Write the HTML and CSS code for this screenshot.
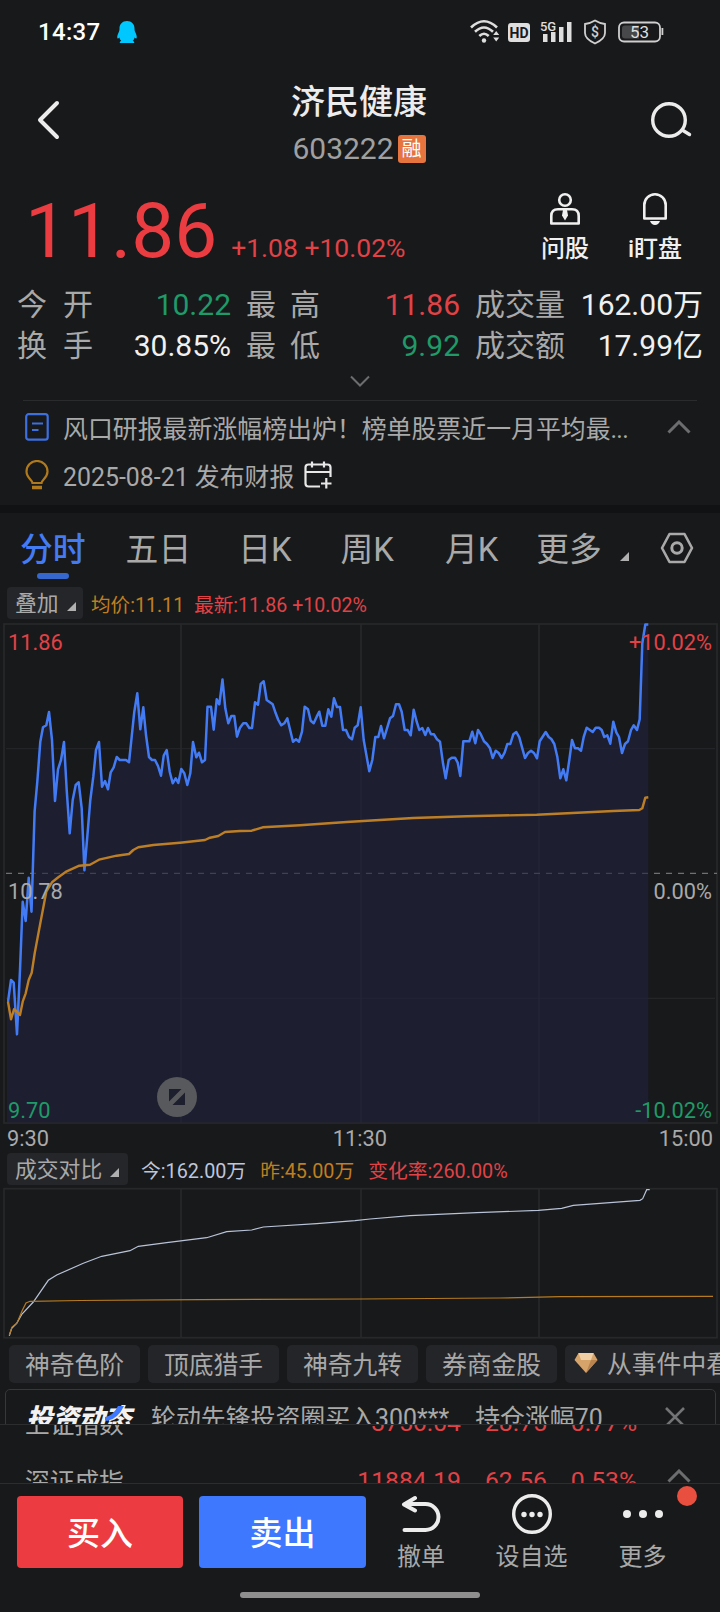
FILE: index.html
```html
<!DOCTYPE html>
<html lang="zh-CN">
<head>
<meta charset="utf-8">
<title>济民健康 603222</title>
<link rel="stylesheet" href="styles.css">
</head>
<body>
<div class="phone">

	<!-- status bar -->
	<div class="status">
		<span class="clock">14:37</span>
		<svg class="qq" width="22" height="24" viewBox="0 0 22 24"><path fill="#00c8ff" d="M11 1c4.600 0 7.500 3.200 7.500 7.500 0 2 .3 2.800 1 4.200 1.200 2.300 1.600 4.300 1 5.600-.4.700-1.200 0-1.900-.9-.3 1.500-1 2.600-1.900 3.400 1.200.5 1.700 1.100 1.500 2.200H3.800c-.2-1.100.3-1.700 1.500-2.200-.9-.8-1.600-1.900-1.900-3.400-.7.900-1.500 1.600-1.900.9-.6-1.300-.2-3.300 1-5.600.7-1.400 1-2.200 1-4.200C3.500 4.200 6.400 1 11 1z"/></svg>
		<svg class="sys" width="196" height="28" viewBox="0 0 196 28">
			<g fill="none" stroke="#dedede" stroke-width="2.600">
				<path d="M1 9.500q13-12.500 26 0"/>
				<path d="M5 13.800q9-8.600 18 0"/>
				<path d="M9.300 18q4.700-4.500 9.400 0"/>
			</g>
			<circle cx="14" cy="22.500" r="2.200" fill="#dedede"/>
			<path fill="#dedede" d="M23.200 17l3-4 3 4zM23.200 19.500l3 4 3-4z"/>
			<rect x="38" y="5" width="22" height="19" rx="3" fill="#dedede"/>
			<text x="49" y="20" class="hd">HD</text>
			<g fill="#dedede">
				<rect x="73" y="16" width="4.500" height="8"/>
				<rect x="81" y="14" width="4.500" height="10"/>
				<rect x="89" y="9" width="4.500" height="15"/>
				<rect x="97" y="4" width="4.500" height="20"/>
			</g>
			<text x="78" y="12.500" class="net">5G</text>
			<path fill="none" stroke="#cfcfcf" stroke-width="1.800" d="M125 2.500c3.500 2.200 6.500 3 10 3.500v9c0 5-4.500 8-10 10.500-5.500-2.500-10-5.500-10-10.500V6c3.500-.5 6.500-1.300 10-3.500z"/>
			<text x="125" y="19" class="coin">$</text>
			<rect x="149" y="4.500" width="41" height="19" rx="5" fill="none" stroke="#cfcfcf" stroke-width="1.800"/>
			<path fill="#47484a" d="M155 7.500h14v13h-14q-3 0-3-3v-7q0-3 3-3z"/>
			<path fill="#cfcfcf" d="M191.500 10h1.800v7h-1.800z"/>
			<text x="169.500" y="20" class="bat">53</text>
		</svg>
	</div>

	<!-- title -->
	<div class="head">
		<svg class="back" width="24" height="42" viewBox="0 0 24 42"><path fill="none" stroke="#ececec" stroke-width="4" stroke-linecap="round" stroke-linejoin="round" d="M20 4L3 21l17 17"/></svg>
		<div class="title">
			<h1>济民健康</h1>
			<div class="code"><span>603222</span><i>融</i></div>
		</div>
		<svg class="search" width="42" height="40" viewBox="0 0 42 40"><g fill="none" stroke="#ececec" stroke-width="3.400" stroke-linecap="round"><circle cx="19" cy="20" r="16.300"/><path d="M33 30.500l6.500 4"/></g></svg>
	</div>

	<!-- price -->
	<div class="price">
		<b class="now">11.86</b>
		<span class="chg">+1.08 +10.02%</span>
		<div class="acts">
			<div class="act">
				<svg width="32" height="34" viewBox="0 0 32 34"><g fill="none" stroke="#f0f0f0" stroke-width="2.600"><circle cx="16" cy="8" r="5.800"/><path d="M2.300 31.500V24q0-6.700 6.700-6.700h14q6.700 0 6.700 6.700v7.500z" stroke-linejoin="round"/></g><path fill="#f0f0f0" d="M14 18h4l1 5.500-3 5-3-5z"/></svg>
				<span>问股</span>
			</div>
			<div class="act">
				<svg width="32" height="34" viewBox="0 0 32 34"><path fill="none" stroke="#f0f0f0" stroke-width="2.600" stroke-linejoin="round" d="M5.300 26.500V13a10.700 10.700 0 0 1 21.400 0v13.500z"/><path fill="#f0f0f0" d="M11 29h10q-1.500 4-5 4t-5-4z"/></svg>
				<span>i盯盘</span>
			</div>
		</div>
	</div>

	<!-- quote grid -->
	<div class="stats">
		<div class="k"><span>今</span><span>开</span></div><div class="v green">10.22</div>
		<div class="k"><span>最</span><span>高</span></div><div class="v red">11.86</div>
		<div class="k">成交量</div><div class="v">162.00万</div>
		<div class="k"><span>换</span><span>手</span></div><div class="v">30.85%</div>
		<div class="k"><span>最</span><span>低</span></div><div class="v green">9.92</div>
		<div class="k">成交额</div><div class="v">17.99亿</div>
	</div>
	<div class="unfold"><svg width="20" height="12" viewBox="0 0 20 12"><path fill="none" stroke="#6c6d6f" stroke-width="2" d="M1 1.500l9 9 9-9"/></svg></div>

	<!-- news -->
	<div class="news">
		<div class="line">
			<svg width="26" height="28" viewBox="0 0 26 28"><g fill="none" stroke="#3d6fe0" stroke-width="2.200"><rect x="2.200" y="1.200" width="21.500" height="25.500" rx="2.500"/><path d="M8 10.500h11M8 17h6.500"/></g></svg>
			<p>风口研报最新涨幅榜出炉！榜单股票近一月平均最<span class="dots">...</span></p>
			<svg class="fold" width="24" height="14" viewBox="0 0 24 14"><path fill="none" stroke="#6c6d6f" stroke-width="3" d="M1.500 12.500L12 2l10.500 10.500"/></svg>
		</div>
		<div class="line">
			<svg width="26" height="30" viewBox="0 0 26 30"><g fill="none" stroke="#b07a1c" stroke-width="2.200"><path d="M8.500 23c0-3-6-5-6-11.500a10.500 10.500 0 0 1 21 0c0 6.500-6 8.500-6 11.500z"/><path d="M8 27.500h10" stroke-width="3.500"/></g></svg>
			<p>2025-08-21 发布财报</p>
			<svg class="cal" width="28" height="28" viewBox="0 0 28 28"><g fill="none" stroke="#e8e8e8" stroke-width="2.200"><path d="M16 25.500H4.500q-3 0-3-3v-16q0-3 3-3h19q3 0 3 3V16M1.500 11h25M8 .5v6M20 .5v6M17 22.500h10.500M22.300 17v10.500"/></g></svg>
		</div>
	</div>

	<!-- period tabs -->
	<div class="tabs">
		<div class="tab on">分时</div>
		<div class="tab">五日</div>
		<div class="tab">日K</div>
		<div class="tab">周K</div>
		<div class="tab">月K</div>
		<div class="tab">更多<i class="tri"></i></div>
		<svg width="34" height="32" viewBox="0 0 34 32"><g fill="none" stroke="#a9a9a9" stroke-width="2.600"><path d="M9.500 2h15L32 16l-7.500 14h-15L2 16z" stroke-linejoin="round"/><circle cx="17" cy="16" r="5.200" stroke-width="3"/></g></svg>
	</div>

	<!-- minute chart -->
	<div class="legend">
		<div class="pick">叠加<i class="tri"></i></div>
		<span class="orange avg">均价:11.11</span>
		<span class="red">最新:11.86 +10.02%</span>
	</div>
	<div class="chart">
		<svg width="720" height="504" viewBox="0 622 720 504">
			<clipPath id="session"><rect x="7" y="622" width="641.300" height="500.500"/></clipPath>
			<g class="grid">
				<rect x="4" y="624" width="713" height="499"/>
				<path d="M181 624v499M361 624v499M539 624v499"/>
				<path class="thin" d="M6 748.700h709M6 998.300h709"/>
			</g>
			<path class="mid" d="M6 873.300h711"/>
			<!-- sides run outside the session clip so only the price edge is stroked -->
			<path class="area" clip-path="url(#session)" d="M3 1140V1001.700H8L11 980L13.700 982.700L17 1034.300L20 970L22.700 901.700L25.700 921L28.700 877.700L31.500 911.700L34.600 811.700L37.300 781.700L40.300 741.700L43 727.300L46.300 725.300L49 712L52 740L55 801L58 769.300L61 760L64 742L66.700 790L69.700 833.300L72.700 800L75.700 785L78.700 782.300L81.700 808.300L84.400 870.300L87.300 836.700L90.300 800L93.300 776.700L96 750L99 742L102 786.700L105 781L108 789.300L110.700 772.300L113.700 767.300L116.700 757L119.700 760H126L129 762.300L131.700 736.700L134.300 711.700L137.300 693.300L140.300 729.300L143.300 707.300L146 735L149 757L152 760H155L158 766L161 775.700L163.700 755.700L166.700 750L169.700 771.700L172.700 783.300L175.700 778.300L178.300 783L181.300 769L184.300 773.300L187.300 785L190.300 773.300L193 742L196.300 757.300L199 752.700L202 762.300L205 760L207.500 706.700H211L213.700 729.700L216.700 699.300L219.300 704.300L222.500 679.500L225.300 708.300L228.300 723.300L231.300 716H234.300L237 736.700L240 727.700L243.300 723.300H246.300L249.300 728H252L255 702.300L258 704.700L260.700 684L263.700 681.300L266.700 700L272.700 704.300L275.700 713.300L278.300 720L281.300 725.300L284.300 723.300L287.300 718.300L293 741.700L296 739.300L299 741.700L302 731.700L304.700 706.700L308 709.300L310.700 720.700L313.700 723.300L316.700 716.700L319.300 711.700L322.300 725.700H325.300L328.300 709.300L331.300 716.700L334 698.300L337 707H340L343 730H346L349 737L352 739.300L354.700 727.700L357.700 725.300L360.700 707.300L363.700 740L369.300 771.300L372.300 760L375.300 737H378.300L381 726L384 738.300L390 718.300L393 716L396 704.300H399L401.700 711.700L404.700 730H407.700L410.700 735.300L413.700 709.700L416.700 721.700L419.300 730L422.300 728L425.300 735L428 728L431 734.300H434L437 739.300L440 741.700L443 763.300L445.700 778.300L448.700 760L451.700 757.700H455L457.700 762.700L460.300 776L463.300 741.300H469.300L472.300 731.700L475.300 743.300L478 730L481 734.700L484 741.300L487 744L490 748.300L492.700 758L495.700 750.700L498.700 753L501.700 758L504.700 752.300L507.300 744H510.300L513.300 734.300L516.300 732L519.300 737.300L522.300 748.300L525 758L528 753L531 750.700L534 753L537 758.300L539.700 741.300L545.700 732L548.700 737L551.300 739L554.300 744L557.300 756.700L560.300 778.300L563.300 769.300L566.300 780.300L569.300 760L572 740L575 748.300H578L581 750.700L583.700 737L586.700 727.700L592.700 732L595.700 727.700H599L601.700 730L604.300 737L607.300 735.300L610.300 743.700L613.300 721.700L616.300 732.300L619 737L622 753L625 744L628 741.300L631 730L633.700 725.300L637 730L639.700 719.300L642.300 643.300L645.300 624.500H655V1140z"/>
			<path class="cost" d="M8 1001.700L11 1019.300L14 1009.300L17 1011.700L20 1015L22.700 1001.700L25.700 993.300L28.700 980L31.700 972.700L34.700 953.300L40.300 923.300L46.300 891.700L49 887L52 882.300L58.300 877.300L66.700 871.300L79.300 865.700L90 864.700L99 859.700L116.700 855.700L129 854L133.300 850L138.300 847.300L153.300 845L180 842.700L205 840L210 837.700L218.300 836L225 832L240 831L251.700 830.700L262.700 827.300L300 825.300L346.700 822L413.300 818L466.700 816.300L536.700 814.700L613.300 811L639.300 810L642.300 808.300L645.300 797.700L648.300 797.300"/>
		</svg>
		<span class="lab t red">11.86</span>
		<span class="lab t r red">+10.02%</span>
		<span class="lab m">10.78</span>
		<span class="lab m r">0.00%</span>
		<span class="lab b green">9.70</span>
		<span class="lab b r green">-10.02%</span>
		<svg class="full" width="40" height="40" viewBox="0 0 40 40"><circle cx="20" cy="20" r="20" fill="#58595c"/><path fill="#1d1e2e" d="M12 12h12.500L12 24.500zM28 28H15.500L28 15.500z"/></svg>
	</div>
	<div class="hours"><span>9:30</span><span>11:30</span><span>15:00</span></div>

	<!-- volume compare -->
	<div class="legend vol">
		<div class="pick">成交对比<i class="tri"></i></div>
		<span class="pale">今:162.00万</span>
		<span class="orange">昨:45.00万</span>
		<span class="red">变化率:260.00%</span>
	</div>
	<svg class="volume" width="720" height="152" viewBox="0 1187 720 152">
		<g class="grid">
			<rect x="4" y="1188.700" width="713" height="149"/>
			<path d="M181 1189v149M361 1189v149M539 1189v149"/>
		</g>
		<path class="today" d="M9.300 1335.700L11.700 1328.300L16.700 1323.300L22 1314L33.300 1302L48.300 1280.300L56.700 1275L83.300 1263.300L101.700 1256.300L130 1250.700L138.300 1246.300L166.700 1242.700L206.700 1237.700L226.700 1231.700L251.700 1230L263.300 1227L316.700 1223.700L355 1220.700L370 1219L410 1215.700L476.700 1212.700L538.300 1210.300L561.700 1208.300L573.300 1205.300L640 1200.300L642.700 1198.700L646.700 1189.700H649.700"/>
		<path class="last" d="M9.300 1335L12 1327L17 1323L22 1311L26 1303L30 1301.300L80 1300.500L200 1299.700L360 1299L500 1298L560 1296.700L713 1296.300"/>
	</svg>

	<!-- tool tags -->
	<div class="tags">
		<span>神奇色阶</span>
		<span>顶底猎手</span>
		<span>神奇九转</span>
		<span>券商金股</span>
		<span class="gem"><svg width="24" height="22" viewBox="0 0 24 22"><path fill="#d6a36b" d="M4.500 1h15L23.500 8 12 21 .5 8z"/><path fill="#f0cfa4" d="M4.500 1h15L17 8H7z"/><path fill="#b98450" d="M17 8h6.500L12 21z"/></svg>从事件中看</span>
	</div>

	<!-- investor banner, runs under the index list -->
	<div class="banner">
		<div class="box">
			<span class="logo">投资动态<svg width="20" height="18" viewBox="0 0 20 18"><path fill="#3d78ff" d="M13 1h6q-6 13-17 15l-2-1v-3q8-1 13-11z"/></svg></span>
			<p>轮动先锋投资圈买入300***</p>
			<p class="gain">持仓涨幅70....</p>
			<svg class="close" width="20" height="20" viewBox="0 0 20 20"><path stroke="#737476" stroke-width="2.600" d="M1 1l18 18M19 1L1 19"/></svg>
		</div>
	</div>

	<!-- index ticker -->
	<div class="ticker">
		<div class="idx"><span>上证指数</span><b>3756.04</b><b>28.75</b><b>0.77%</b></div>
		<div class="idx"><span>深证成指</span><b>11884.19</b><b>62.56</b><b>0.53%</b><svg width="24" height="14" viewBox="0 0 24 14"><path fill="none" stroke="#6c6d6f" stroke-width="3" d="M1.500 12.500L12 2l10.500 10.500"/></svg></div>
	</div>

	<!-- bottom bar -->
	<div class="bar">
		<div class="btn buy">买入</div>
		<div class="btn sell">卖出</div>
		<div class="item undo">
			<svg width="40" height="40" viewBox="0 0 40 40"><path fill="none" stroke="#ececec" stroke-width="4" stroke-linecap="round" stroke-linejoin="round" d="M14 4L3 10.500 14 16.500M4 10h20.500a13 13 0 0 1 0 26H3.500"/></svg>
			<span>撤单</span>
		</div>
		<div class="item">
			<svg width="40" height="40" viewBox="0 0 40 40"><circle cx="20" cy="20" r="18.300" fill="none" stroke="#ececec" stroke-width="3.400"/><g fill="#ececec"><circle cx="12" cy="20.500" r="2.700"/><circle cx="20" cy="20.500" r="2.700"/><circle cx="28" cy="20.500" r="2.700"/></g></svg>
			<span>设自选</span>
		</div>
		<div class="item more">
			<svg width="40" height="40" viewBox="0 0 40 40"><g fill="#ececec"><circle cx="4" cy="20" r="4"/><circle cx="20" cy="20" r="4"/><circle cx="36" cy="20" r="4"/></g></svg>
			<span>更多</span>
			<i class="dot"></i>
		</div>
	</div>
	<div class="home"></div>
</div>
</body>
</html>
```
FILE: styles.css
```css
*{box-sizing:border-box;}
html{overflow:hidden;}
body{margin:0; background:#18191b; color:#a9a9a9; font-family:Roboto,"Noto Sans CJK SC",sans-serif;}
h1,p{margin:0; font-weight:normal;}
i{font-style:normal;}
b{font-weight:normal;}
svg{display:block; flex:none;}
.phone{width:720px; height:1612px; overflow:hidden; display:flex; flex-direction:column; white-space:nowrap;}
.phone>*{flex:none;}
.red{color:#e04246;}
.green{color:#1f9a68;}
.orange{color:#c07f1f;}
.pale{color:#bcc6de;}

/* status */
.status{height:64px; display:flex; align-items:center; padding:0 54px 0 38px;}
.clock{font-size:24px; font-weight:500; color:#fff; width:78px; letter-spacing:.3px;}
.sys{margin-left:auto;}
.sys text{font-family:Roboto,sans-serif; text-anchor:middle;}
.hd{font-size:14px; font-weight:700; fill:#18191b;}
.net{font-size:13px; font-weight:500; fill:#dedede;}
.coin{font-size:14px; font-weight:500; fill:#cfcfcf;}
.bat{font-size:17px; fill:#dedede;}

/* title */
.head{height:112px; display:flex; align-items:center; justify-content:space-between; padding:0 28px 0 37px;}
.title{text-align:center; padding:12px 0 0 7px;}
.title h1{font-size:34px; line-height:46px; font-weight:500; color:#ececec;}
.code{display:flex; align-items:center; justify-content:center; gap:4px; font-size:30px; line-height:48px; color:#a0a0a0;}
.code i{width:28px; height:28px; border-radius:3px; background:#e5743e; color:#fff; font-size:20px; line-height:28px; text-align:center;}

/* price */
.price{height:100px; display:flex; align-items:baseline; padding-left:25px;}
.now{font-size:76.5px; line-height:111px; color:#eb3c41;}
.chg{font-size:26.5px; color:#e04246; margin-left:14px;}
.acts{margin-left:auto; align-self:flex-start; display:flex; padding:16px 20px 0 0;}
.act{width:90px; display:flex; flex-direction:column; align-items:center; font-size:24px; line-height:36px; font-weight:500; color:#f0f0f0; gap:5px;}

/* quotes */
.stats{height:87px; padding:8px 17px 0; display:grid; grid-template-columns:76px 138px 15px 74px 140px 15px 90px 1fr; grid-auto-rows:41px; font-size:30px; line-height:41px;}
.k{display:flex; justify-content:space-between;}
.k:nth-child(6n+3){grid-column:4;}
.k:nth-child(6n+5){grid-column:7;}
.v{text-align:right; color:#f0f0f0;}
.v.green{color:#1f9a68;}
.v.red{color:#e04246;}
.unfold{height:37px; display:flex; justify-content:center; padding-top:12px;}

/* news */
.news{height:105px; margin:0 23px; border-top:1px solid #2a2b2d; padding:2px 0 0 1px;}
.line{display:flex; align-items:center; height:48px; font-size:24.9px;}
.line p{margin-left:13px;}
.dots{letter-spacing:-.8px;}
.fold{margin-left:auto; margin-right:6px;}
.cal{margin-left:10px;}

/* tabs */
.tabs{height:79px; border-top:8px solid #111214; display:flex; align-items:flex-start; padding:10px 26px 0 20px; font-size:32.8px; line-height:54px;}
.tab{position:relative; margin-right:40px;}
.tab.on{color:#437bf5; font-weight:500;}
.tab.on:after{content:""; position:absolute; left:17px; bottom:-2px; width:32px; height:6px; border-radius:3px; background:#3567cf;}
.tab:nth-child(2){margin-right:47px;}
.tab:nth-child(3){margin-right:49px;}
.tab:nth-child(4){margin-right:51px;}
.tab:nth-child(5){margin-right:38px;}
.tab:nth-child(6){margin-right:0;}
.tabs svg{margin:9px 0 0 auto;}
.tri{display:inline-block; border-left:9px solid transparent; border-bottom:9px solid #b0b0b0;}
.tab .tri{margin-left:18px;}

/* legends */
.legend{height:35px; display:flex; align-items:center; padding:0 0 3px 7px; margin-top:3px; font-size:19.6px;}
.pick{width:76px; height:32px; padding-left:8px; border-radius:4px; background:#25262a; color:#a9a9a9; font-size:21.8px; line-height:34px;}
.pick .tri{margin-left:8px;}
.legend .avg{margin:0 10px 0 8px;}
.vol{margin-top:0; height:34px; padding-bottom:2px;}
.vol .pick{width:121px;}
.vol .pale{margin:0 14px 0 13px; font-size:19.8px;}
.vol .orange{margin-right:14px; font-size:19.8px;}
.vol .red{font-size:19.8px;}

/* minute chart */
.chart{position:relative; height:504px;}
.grid{fill:none; stroke:#27282a; stroke-width:1.7;}
.grid .thin{stroke-width:1;}
.mid{fill:none; stroke:#85868a; stroke-width:1; stroke-dasharray:6 6;}
.area{fill:rgba(33,33,64,.6); stroke:#437bf5; stroke-width:2.5; stroke-linejoin:round;}
.cost{fill:none; stroke:#bd7f26; stroke-width:2.4; stroke-linejoin:round;}
.lab{position:absolute; left:8px; font-size:21.8px; line-height:26px;}
.lab.r{left:auto; right:8px;}
.lab.t{top:8px;}
.lab.m{top:257px;}
.lab.b{top:476px;}
.full{position:absolute; left:157px; top:455px;}
.hours{height:27px; display:grid; grid-template-columns:1fr 1fr 1fr; padding:0 7px; font-size:21.8px; line-height:26px;}
.hours span:nth-child(2){text-align:center;}
.hours span:nth-child(3){text-align:right;}
.today{fill:none; stroke:#b9c3d8; stroke-width:1.2;}
.last{fill:none; stroke:#b57a22; stroke-width:1.2;}

/* tags */
.tags{height:50px; display:flex; gap:8px; padding:6px 0 0 9px;}
.tags span{flex:none; width:131px; height:38px; border-radius:5px; background:#242528; font-size:24.8px; line-height:41px; text-align:center;}
.tags .gem{width:190px; display:flex; align-items:center; padding-left:9px; gap:9px;}
.gem svg{margin-top:-3px;}

/* banner */
.banner{height:35px; padding:0 4px 0 5px; overflow:hidden;}
.box{height:60px; border:1px solid #37383a; border-radius:5px; display:flex; align-items:center; padding:0 30px 6px 20px; font-size:24.9px;}
.logo{position:relative; width:125px; font-size:26.5px; font-weight:900; font-style:italic; color:#f2f2f2; letter-spacing:-.3px;}
.logo svg{position:absolute; left:79px; top:8px;}
.gain{margin-left:26px;}
.close{margin:2px 0 0 auto;}

/* ticker */
.ticker{height:59px; border-top:1px solid #2c2d2f; overflow:hidden;}
.idx{display:flex; height:58px; align-items:center; padding-left:25px; font-size:24.7px; position:relative; top:-32px;}
.idx span{width:120px;}
.idx b{color:#e04246; width:90px; text-align:right;}
.idx span+b{width:316px;}
.idx b+b{width:86px;}
.idx b+b+b{width:90px;}
.idx svg{margin-left:30px; margin-top:-8px;}

/* bottom */
.bar{height:98px; border-top:1px solid #2c2d2f; display:flex; padding:12px 0 0 17px;}
.btn{width:166px; height:72px; border-radius:4px; color:#fff; font-size:33px; font-weight:500; line-height:75px; text-align:center;}
.buy{background:#ed3c41; margin-right:16px;}
.sell{background:#3d78ff; width:167px;}
.item{position:relative; width:111px; display:flex; flex-direction:column; align-items:center; font-size:24px; line-height:36px; gap:5px; margin-top:-2px;}
.undo{width:110px;}
.dot{position:absolute; left:90px; top:-8px; width:20px; height:20px; border-radius:50%; background:#e84f3f;}
.home{width:240px; height:6px; border-radius:3px; background:#8f8f90; margin:11px auto 0;}
```
